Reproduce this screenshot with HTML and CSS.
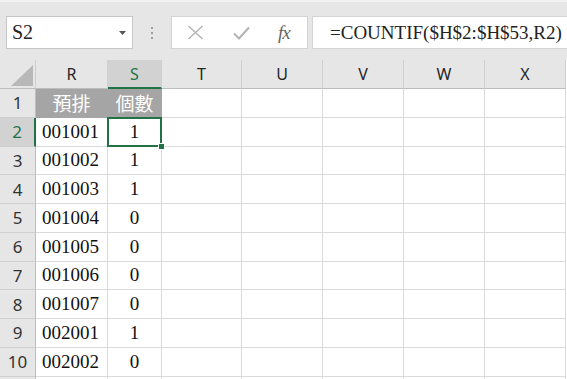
FILE: index.html
```html
<!DOCTYPE html>
<html>
<head>
<meta charset="utf-8">
<link rel="stylesheet" href="styles.css">
</head>
<body>
<div class="toolbar">
  <div class="namebox">
    <span class="name">S2</span>
    <svg class="caret" width="7" height="4" viewBox="0 0 7 4"><path d="M0 0H7L3.5 4Z" fill="#555"/></svg>
  </div>
  <div class="sep"><i></i><i></i><i></i></div>
  <div class="fbtns">
    <svg class="ico" width="17" height="15" viewBox="0 0 17 15"><path d="M1.5 1L15.5 14M15.5 1L1.5 14" stroke="#b3b3b3" stroke-width="1.4" fill="none"/></svg>
    <svg class="ico" width="17" height="14" viewBox="0 0 17 14"><path d="M1 7.5L6 12.5L16 1.5" stroke="#b3b3b3" stroke-width="2" fill="none"/></svg>
    <span class="fx">fx</span>
  </div>
  <div class="formula">=COUNTIF($H$2:$H$53,R2)</div>
</div>
<div class="sheet">
  <div class="corner"><svg width="22" height="21" viewBox="0 0 22 21"><path d="M22 0V21H0Z" fill="#b8b8b8"/></svg></div>
  <div class="ch">R</div><div class="ch sel">S</div><div class="ch">T</div><div class="ch">U</div><div class="ch">V</div><div class="ch">W</div><div class="ch">X</div>

  <div class="rh">1</div><div class="c hd">預排</div><div class="c hd">個數</div><div class="c"></div><div class="c"></div><div class="c"></div><div class="c"></div><div class="c"></div>
  <div class="rh sel">2</div><div class="c t">001001</div><div class="c n active">1<span class="handle"></span></div><div class="c"></div><div class="c"></div><div class="c"></div><div class="c"></div><div class="c"></div>
  <div class="rh">3</div><div class="c t">001002</div><div class="c n">1</div><div class="c"></div><div class="c"></div><div class="c"></div><div class="c"></div><div class="c"></div>
  <div class="rh">4</div><div class="c t">001003</div><div class="c n">1</div><div class="c"></div><div class="c"></div><div class="c"></div><div class="c"></div><div class="c"></div>
  <div class="rh">5</div><div class="c t">001004</div><div class="c n">0</div><div class="c"></div><div class="c"></div><div class="c"></div><div class="c"></div><div class="c"></div>
  <div class="rh">6</div><div class="c t">001005</div><div class="c n">0</div><div class="c"></div><div class="c"></div><div class="c"></div><div class="c"></div><div class="c"></div>
  <div class="rh">7</div><div class="c t">001006</div><div class="c n">0</div><div class="c"></div><div class="c"></div><div class="c"></div><div class="c"></div><div class="c"></div>
  <div class="rh">8</div><div class="c t">001007</div><div class="c n">0</div><div class="c"></div><div class="c"></div><div class="c"></div><div class="c"></div><div class="c"></div>
  <div class="rh">9</div><div class="c t">002001</div><div class="c n">1</div><div class="c"></div><div class="c"></div><div class="c"></div><div class="c"></div><div class="c"></div>
  <div class="rh">10</div><div class="c t">002002</div><div class="c n">0</div><div class="c"></div><div class="c"></div><div class="c"></div><div class="c"></div><div class="c"></div>
  <div class="rh"></div><div class="c"></div><div class="c"></div><div class="c"></div><div class="c"></div><div class="c"></div><div class="c"></div><div class="c"></div>
</div>
</body>
</html>
```

FILE: styles.css
```css
html, body {
  margin: 0;
  padding: 0;
  background: #ffffff;
  overflow: hidden;
}
body {
  width: 567px;
  height: 379px;
  font-family: "Liberation Serif", "Noto Sans CJK TC", serif;
}
.toolbar {
  height: 60px;
  box-sizing: border-box;
  background: #e6e6e6;
  border-top: 2px solid #f2f2f2;
  padding: 14px 0 0 6px;
  display: flex;
  align-items: flex-start;
}
.namebox {
  flex: none;
  width: 127px;
  height: 33px;
  box-sizing: border-box;
  background: #fff;
  border: 1px solid #c6c6c6;
  display: flex;
  align-items: center;
  padding: 0 6px 0 5px;
}
.name {
  flex: 1;
  font-size: 20px;
  color: #222;
}
.caret {
  margin-top: 1px;
}
.sep {
  flex: none;
  width: 38px;
  height: 33px;
  display: flex;
  flex-direction: column;
  align-items: center;
  justify-content: center;
  gap: 3px;
}
.sep i {
  width: 2px;
  height: 2px;
  background: #9e9e9e;
  display: block;
}
.fbtns {
  flex: none;
  width: 137px;
  height: 33px;
  box-sizing: border-box;
  background: #fff;
  border: 1px solid #d4d4d4;
  display: flex;
  align-items: center;
  padding-left: 15px;
  gap: 29px;
}
.ico {
  flex: none;
}
.fx {
  font-style: italic;
  font-size: 19px;
  color: #666;
  margin-left: -1px;
  letter-spacing: -1px;
}
.formula {
  flex: 1;
  min-width: 0;
  margin-left: 4px;
  height: 33px;
  box-sizing: border-box;
  background: #fff;
  border: 1px solid #d4d4d4;
  border-right: none;
  padding-left: 17px;
  font-size: 19px;
  line-height: 31px;
  color: #222;
  white-space: nowrap;
  overflow: hidden;
}
.sheet {
  display: grid;
  grid-template-columns: 36px 72px 54px 80px 81px 81px 81px 81px;
  grid-template-rows: 29px repeat(11, 28.75px);
  background: #fff;
}
.corner {
  background: #e6e6e6;
  border-right: 1px solid #cfcfcf;
  border-bottom: 1px solid #bdbdbd;
  display: flex;
  align-items: flex-end;
  justify-content: flex-end;
  padding: 0 2px 2px 0;
}
.ch {
  background: #e6e6e6;
  border-right: 1px solid #cfcfcf;
  border-bottom: 1px solid #bdbdbd;
  display: flex;
  align-items: center;
  justify-content: center;
  font-family: "Noto Sans", "DejaVu Sans", sans-serif;
  font-size: 16px;
  color: #262626;
}
.ch.sel {
  background: #d2d2d2;
  color: #217346;
  border-bottom: 2px solid #217346;
}
.rh {
  background: #e6e6e6;
  border-right: 1px solid #bdbdbd;
  border-bottom: 1px solid #cfcfcf;
  display: flex;
  align-items: center;
  justify-content: center;
  font-family: "Noto Sans", "DejaVu Sans", sans-serif;
  font-size: 17px;
  color: #333;
}
.rh.sel {
  background: #d2d2d2;
  color: #217346;
  border-right: 2px solid #217346;
}
.c {
  border-right: 1px solid #dadada;
  border-bottom: 1px solid #dadada;
  display: flex;
  align-items: center;
  font-size: 19px;
  color: #111;
  position: relative;
}
.c.t {
  padding-left: 6px;
}
.c.n {
  justify-content: center;
}
.c.hd {
  background: #a5a5a5;
  border-color: #a5a5a5;
  color: #fff;
  justify-content: center;
  font-family: "Noto Sans CJK TC", sans-serif;
  font-size: 19px;
}
.c.active::after {
  content: "";
  position: absolute;
  left: -1px;
  top: -1px;
  right: -1px;
  bottom: -1px;
  border: 2px solid #217346;
}
.handle {
  position: absolute;
  right: -4px;
  bottom: -4px;
  width: 5px;
  height: 5px;
  background: #217346;
  border: 1px solid #fff;
  z-index: 2;
}
```
